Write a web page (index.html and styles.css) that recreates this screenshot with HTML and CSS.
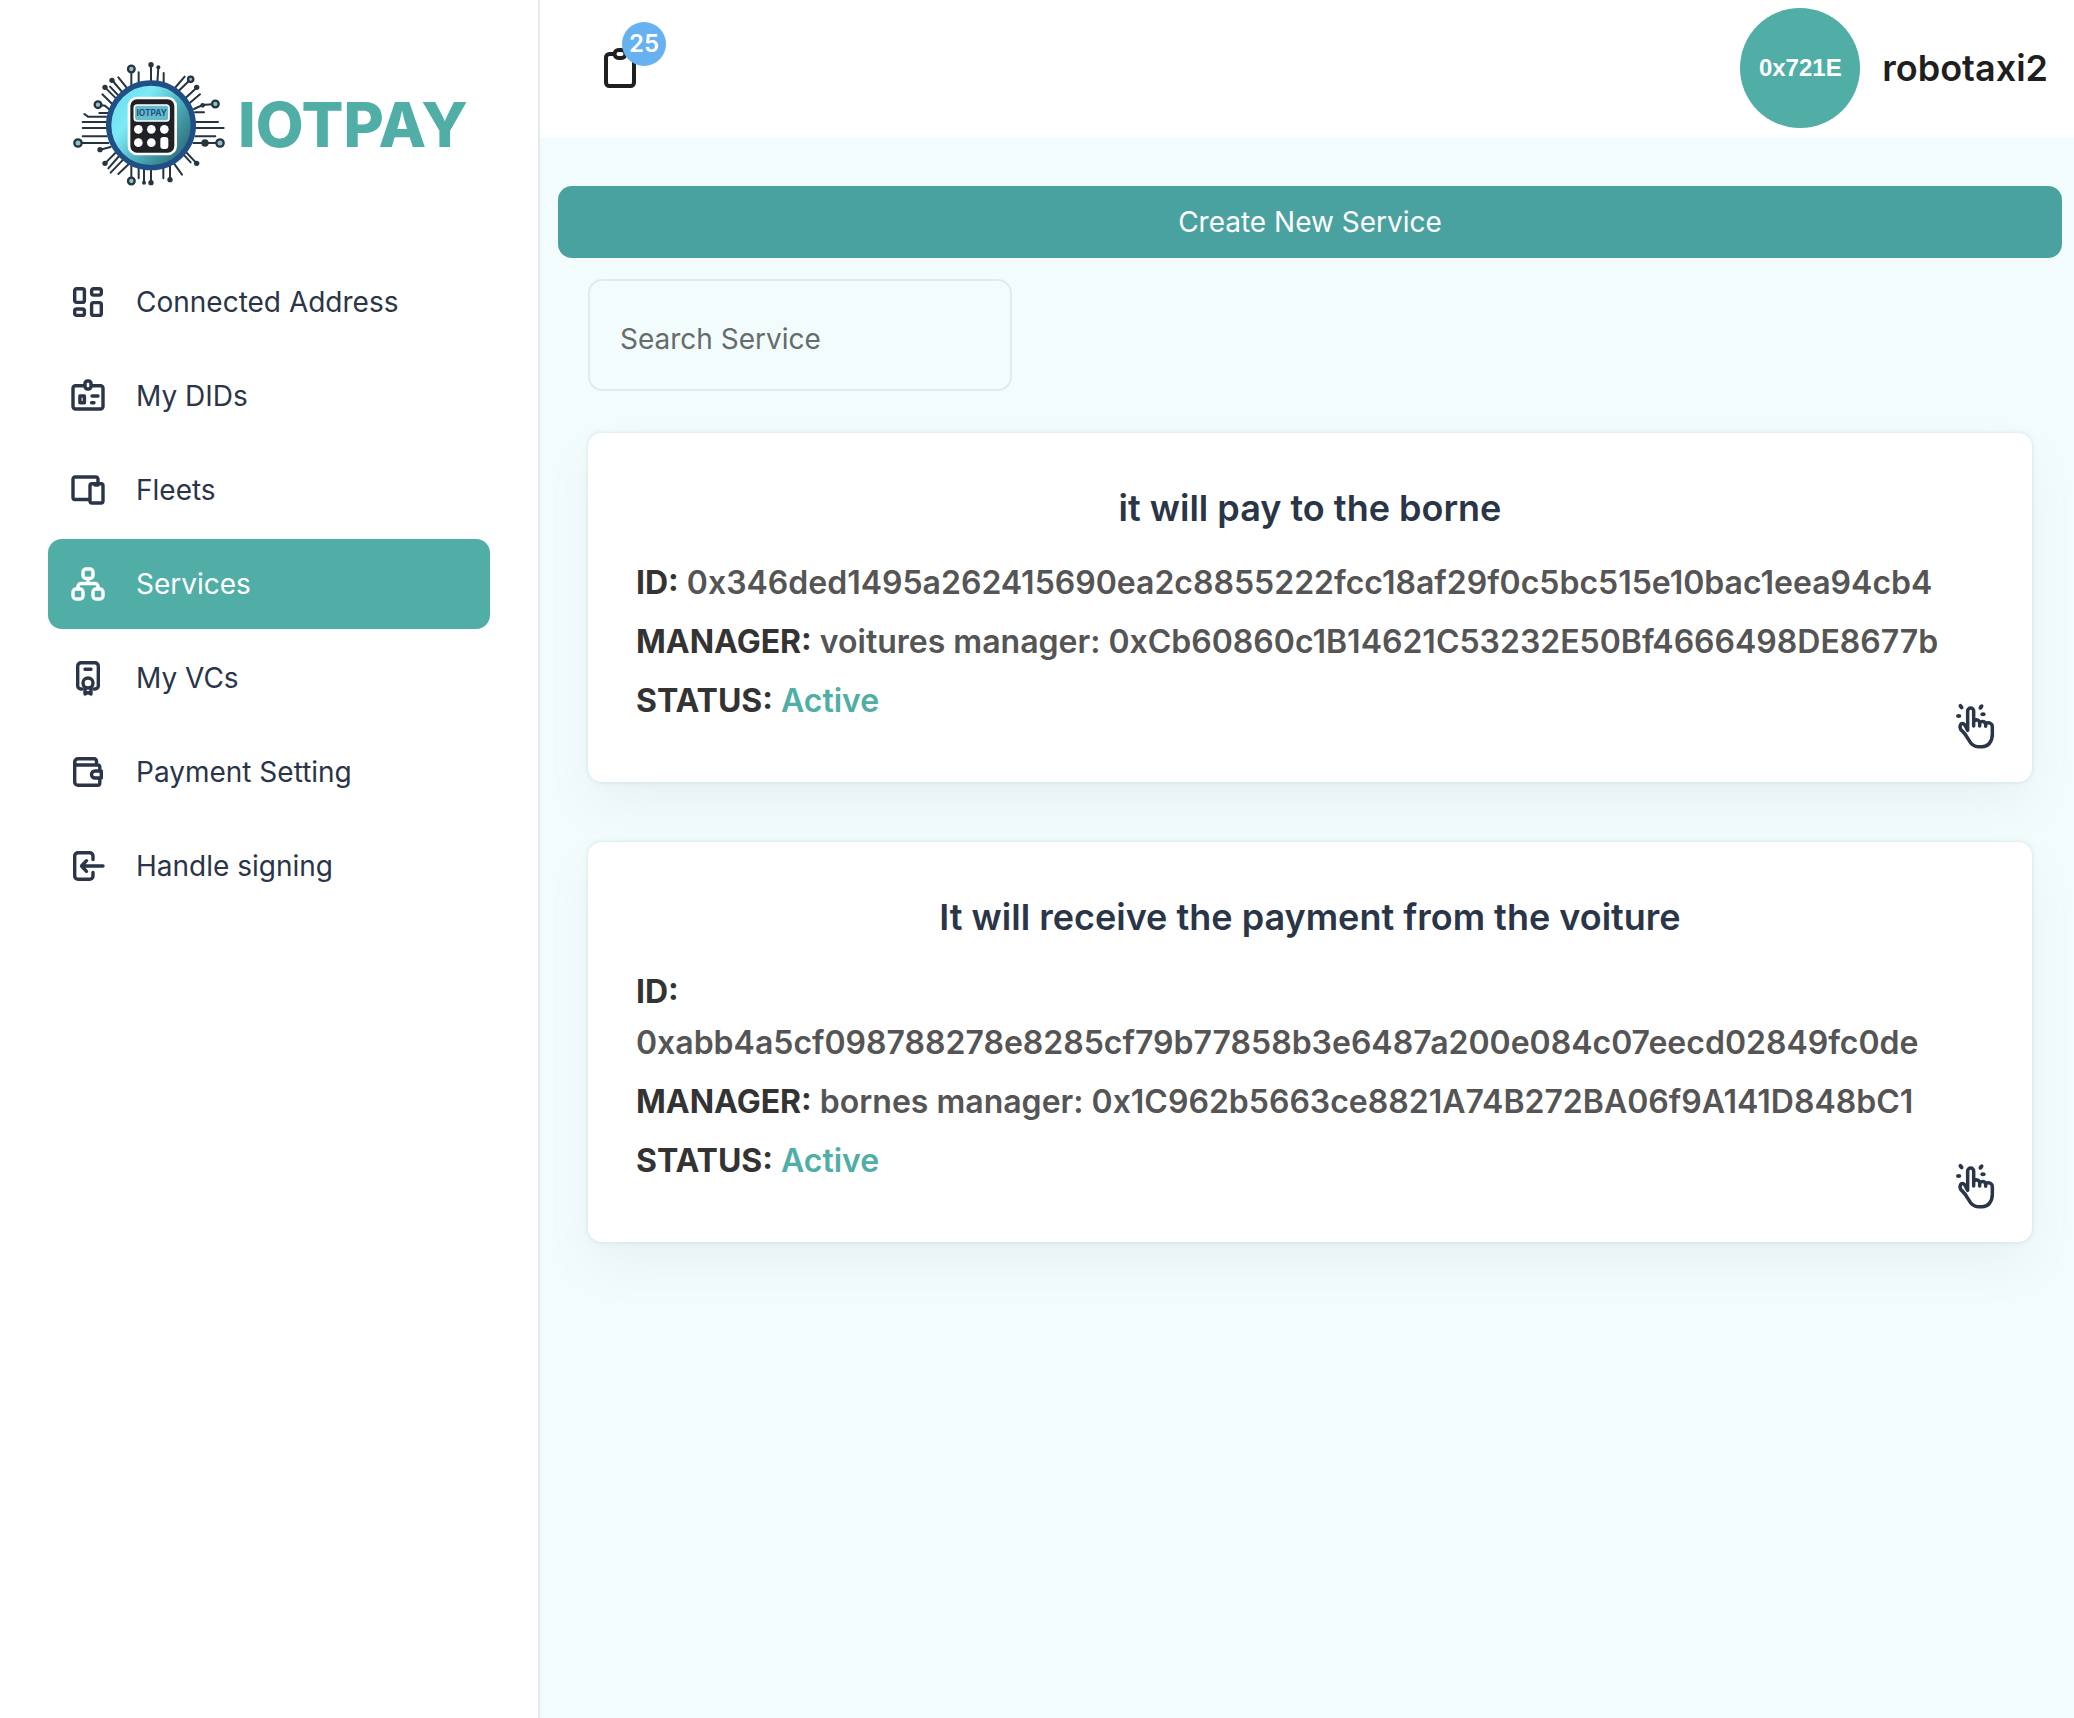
FILE: index.html
```
<!DOCTYPE html>
<html lang="en">
<head>
<meta charset="utf-8">
<title>IOTPAY - Services</title>
<link rel="stylesheet" href="styles.css">
</head>
<body>
<svg width="0" height="0" class="sprite" aria-hidden="true">
  <symbol id="tap" viewBox="45 38 120 138">
    <g fill="none" stroke="currentColor" stroke-width="10.500" stroke-linecap="round" stroke-linejoin="round">
      <path d="M83 119V61a9 9 0 0 1 18 0V106M101 92c8-8 18-4 18 6v8M119 96c8-7 18-3 18 7v4M137 99c10-6 20-1 20 10v22c0 24-14 37-31 37h-10c-16 0-24-9-30-21-7-14-14-22-24-31-5-12 1-19 8-17 5 2 8 12 13 20" transform="translate(0 1)"/>
    </g>
    <g fill="currentColor">
      <ellipse cx="63" cy="49" rx="6" ry="9" transform="rotate(-35 63 49)"/>
      <ellipse cx="123" cy="50" rx="6" ry="9" transform="rotate(35 123 50)"/>
      <ellipse cx="56" cy="77" rx="8" ry="6"/>
      <ellipse cx="129" cy="72" rx="8" ry="6"/>
    </g>
  </symbol>
</svg>
<div class="app">
  <aside class="sidebar">
    <a class="logo" href="#">
      <svg class="logo-mark" viewBox="0 0 480 420" aria-hidden="true">
        <defs>
          <linearGradient id="disc" x1="0.1" y1="0.1" x2="0.95" y2="0.75">
            <stop offset="0" stop-color="#6fe0f0"/>
            <stop offset="0.3" stop-color="#7beaf5"/>
            <stop offset="0.65" stop-color="#4aa9b8"/>
            <stop offset="1" stop-color="#2f6f7b"/>
          </linearGradient>
        </defs>
        <g fill="none" stroke="#26343f" stroke-width="6" stroke-linecap="round">
          <path d="M184 42V92M206 52V92M243 30V82M265 38L262 82M281 54V88"/>
          <path d="M344 65L312 102M362 73L322 112M380 98L340 135M390 118L352 150M436 147L398 150L372 162M402 172H375"/>
          <path d="M444 201H376M461 219H376M436 244H376M450 264H370"/>
          <path d="M380 325L345 288M362 322L338 296M336 359L308 320M300 373V330M280 370V335M243 382V345M222 382V340M206 370V335M184 378V330"/>
          <path d="M105 325L142 288M115 340L150 300M122 353L168 305M145 357L182 322"/>
          <path d="M90 284L122 276M24 264H115M38 244H110M38 219H110M38 201H110M43 177L54 185H110M88 174H118M84 149L105 152L128 172"/>
          <path d="M97 118L138 158M105 97L150 142M120 95L158 135M126 75L168 125M145 67L178 108"/>
        </g>
        <g fill="#26343f">
          <circle cx="243" cy="29" r="8"/><circle cx="265" cy="37" r="6"/><circle cx="380" cy="97" r="8"/>
          <circle cx="398" cy="151" r="7"/><circle cx="405" cy="264" r="11"/><circle cx="380" cy="325" r="8"/>
          <circle cx="300" cy="374" r="8"/><circle cx="243" cy="383" r="8"/><circle cx="222" cy="383" r="6"/>
          <circle cx="105" cy="325" r="8"/><circle cx="90" cy="284" r="8"/><circle cx="105" cy="97" r="8"/><circle cx="126" cy="76" r="8"/>
        </g>
        <g fill="#8fc3cc" stroke="#26343f" stroke-width="7">
          <circle cx="184" cy="42" r="10"/><circle cx="362" cy="73" r="8"/><circle cx="436" cy="147" r="10"/>
          <circle cx="450" cy="264" r="11"/><circle cx="184" cy="378" r="10"/><circle cx="24" cy="264" r="11"/><circle cx="84" cy="149" r="10"/>
        </g>
        <circle cx="243" cy="211" r="127" fill="url(#disc)" stroke="#1f4f85" stroke-width="16"/>
        <rect x="177" y="129" width="140" height="168" rx="24" fill="#1f2126" stroke="#fff" stroke-width="8"/>
        <rect x="193" y="150" width="104" height="48" rx="8" fill="#66bccb" stroke="#fff" stroke-width="5"/>
        <text x="245" y="184" text-anchor="middle" class="logo-screen">IOTPAY</text>
        <g fill="#fff">
          <circle cx="205" cy="223" r="13"/><circle cx="244" cy="223" r="13"/><circle cx="283" cy="223" r="13"/>
          <circle cx="205" cy="263" r="13"/><circle cx="244" cy="263" r="13"/><rect x="271" y="246" width="24" height="36" rx="9"/>
        </g>
      </svg>
      <span class="logo-text">IOTPAY</span>
    </a>
    <nav class="nav" aria-label="Main">
      <a class="nav-item" href="#">
        <svg class="icon" viewBox="0 0 36 36" aria-hidden="true"><rect x="4.7" y="4.7" width="9.7" height="13.7" rx="2"/><rect x="21.6" y="4.7" width="9.7" height="6.4" rx="2"/><rect x="4.7" y="25" width="9.7" height="6.4" rx="2"/><rect x="21.6" y="18.6" width="9.7" height="12.8" rx="2"/></svg>
        Connected Address</a>
      <a class="nav-item" href="#">
        <svg class="icon" viewBox="0 0 36 36" aria-hidden="true"><path d="M14 7.7H5.5A2.5 2.5 0 0 0 3 10.200V28.500A2.500 2.500 0 0 0 5.500 31H30.500A2.500 2.500 0 0 0 33 28.500V10.200A2.500 2.500 0 0 0 30.500 7.700H22"/><rect x="15" y="3" width="6" height="8" rx="2.500"/><rect x="9.900" y="18" width="4.500" height="6.700"/><path d="M22 18H28M21.600 24.700H24"/></svg>
        My DIDs</a>
      <a class="nav-item" href="#">
        <svg class="icon" viewBox="0 0 36 36" aria-hidden="true"><path d="M28 11V7A2 2 0 0 0 26 5H5A2 2 0 0 0 3 7V25.500A2 2 0 0 0 5 27.500H19"/><rect x="20" y="11.700" width="13" height="19.300" rx="2"/><path d="M25 13H28"/></svg>
        Fleets</a>
      <a class="nav-item active" href="#" aria-current="page">
        <svg class="icon" viewBox="0 0 36 36" aria-hidden="true"><rect x="13" y="3" width="10" height="9.500" rx="3"/><rect x="3" y="23" width="10" height="10" rx="3"/><rect x="23" y="23" width="10" height="10" rx="3"/><path d="M18 12.500V17.500M8 22V20.500A3 3 0 0 1 11 17.500H25A3 3 0 0 1 28 20.500V22"/></svg>
        Services</a>
      <a class="nav-item" href="#">
        <svg class="icon" viewBox="0 0 36 36" aria-hidden="true"><path d="M12 29H11A3.300 3.300 0 0 1 7.700 25.700V6A3.300 3.300 0 0 1 11 2.700H25A3.300 3.300 0 0 1 28.300 6V25.700A3.300 3.300 0 0 1 25 29H24M15 9.300H21"/><circle cx="18" cy="23" r="5"/><path d="M15 28V34L18 32.500L21 34V28"/></svg>
        My VCs</a>
      <a class="nav-item" href="#">
        <svg class="icon" viewBox="0 0 36 36" aria-hidden="true"><path d="M26.500 11V7A2.300 2.300 0 0 0 24.200 4.700H8A3.300 3.300 0 0 0 4.700 8V28A3.300 3.300 0 0 0 8 31.300H27.500A2.300 2.300 0 0 0 29.800 29V25M4.700 8.500A2.500 2.500 0 0 0 7.200 11H27.500A2.300 2.300 0 0 1 29.800 13.300V16M31.300 17H25A3.500 3.500 0 0 0 25 24H31.300Z"/></svg>
        Payment Setting</a>
      <a class="nav-item" href="#">
        <svg class="icon" viewBox="0 0 36 36" aria-hidden="true"><path d="M23 11.500V8A3.300 3.300 0 0 0 19.700 4.700H8A3.300 3.300 0 0 0 4.700 8V28A3.300 3.300 0 0 0 8 31.300H19.700A3.300 3.300 0 0 0 23 28V24.500M33 18H11.500M16.500 12.700L11.500 18L16.500 23.300"/></svg>
        Handle signing</a>
    </nav>
  </aside>
  <div class="page">
    <header class="topbar">
      <button class="tasks" type="button" aria-label="Pending requests">
        <svg class="clipboard" viewBox="0 0 32 40" aria-hidden="true"><path d="M9 6H5.500A3.500 3.500 0 0 0 2 9.500V34.500A3.500 3.500 0 0 0 5.500 38H26.500A3.500 3.500 0 0 0 30 34.500V9.500A3.500 3.500 0 0 0 26.500 6H23"/><rect x="10.500" y="2" width="11" height="8" rx="4"/></svg>
        <span class="badge">25</span>
      </button>
      <div class="user">
        <span class="avatar">0x721E</span>
        <span class="user-name">robotaxi2</span>
      </div>
    </header>
    <main class="content">
      <button class="create" type="button">Create New Service</button>
      <input class="search" type="text" placeholder="Search Service" aria-label="Search Service">
      <article class="card">
        <h2>it will pay to the borne</h2>
        <p><strong>ID:</strong> 0x346ded1495a262415690ea2c8855222fcc18af29f0c5bc515e10bac1eea94cb4</p>
        <p><strong>MANAGER:</strong> voitures manager: 0xCb60860c1B14621C53232E50Bf4666498DE8677b</p>
        <p><strong>STATUS:</strong> <span class="status">Active</span></p>
        <button class="open" type="button" aria-label="Open service"><svg width="40" height="46" aria-hidden="true"><use href="#tap"/></svg></button>
      </article>
      <article class="card">
        <h2>It will receive the payment from the voiture</h2>
        <p><strong>ID:</strong> 0xabb4a5cf098788278e8285cf79b77858b3e6487a200e084c07eecd02849fc0de</p>
        <p><strong>MANAGER:</strong> bornes manager: 0x1C962b5663ce8821A74B272BA06f9A141D848bC1</p>
        <p><strong>STATUS:</strong> <span class="status">Active</span></p>
        <button class="open" type="button" aria-label="Open service"><svg width="40" height="46" aria-hidden="true"><use href="#tap"/></svg></button>
      </article>
    </main>
  </div>
</div>
</body>
</html>
```
FILE: styles.css
```
*,
*::before,
*::after {
  box-sizing: border-box;
}

body {
  margin: 0;
  font-family: Inter, "Liberation Sans", sans-serif;
  font-size: 28px;
  color: #2a3547;
  background: #f2fcfd;
}

button,
input {
  font: inherit;
}

.sprite {
  position: absolute;
}

.app {
  display: flex;
  min-height: 100vh;
}

/* Sidebar */
.sidebar {
  flex: none;
  width: 540px;
  padding: 55px 48px;
  background: #fff;
  border-right: 2px solid #e5eaef;
}

.logo {
  display: flex;
  align-items: center;
  gap: 8px;
  padding-left: 22px;
  text-decoration: none;
  color: #50aea7;
}

.logo-mark {
  flex: none;
  width: 160px;
  height: 140px;
}

.logo-screen {
  font-size: 25px;
  font-weight: 700;
  fill: #1f4f85;
}

.logo-text {
  font-size: 62px;
  font-weight: 800;
  line-height: 76px;
}

.nav {
  display: flex;
  flex-direction: column;
  gap: 4px;
  margin-top: 62px;
}

.nav-item {
  display: flex;
  align-items: center;
  gap: 30px;
  height: 90px;
  padding: 0 22px;
  border-radius: 14px;
  color: #2a3547;
  text-decoration: none;
}

.nav-item.active {
  color: #fff;
  background: #50aea7;
}

.icon {
  flex: none;
  width: 36px;
  height: 36px;
  fill: none;
  stroke: currentColor;
  stroke-width: 3.4;
  stroke-linecap: round;
  stroke-linejoin: round;
}

/* Page */
.page {
  flex: 1;
  min-width: 0;
}

.topbar {
  display: flex;
  align-items: center;
  justify-content: space-between;
  padding: 8px 26px 10px 64px;
  background: #fff;
}

.tasks {
  position: relative;
  padding: 0;
  border: 0;
  background: none;
  color: #1f1f1f;
}

.clipboard {
  display: block;
  width: 32px;
  height: 40px;
  fill: none;
  stroke: currentColor;
  stroke-width: 4;
  stroke-linecap: round;
}

.badge {
  position: absolute;
  top: -26px;
  left: 18px;
  width: 44px;
  height: 44px;
  border-radius: 50%;
  background: #66b2f0;
  color: #fff;
  font-size: 24px;
  font-weight: 600;
  line-height: 44px;
  text-align: center;
}

.user {
  display: flex;
  align-items: center;
  gap: 22px;
}

.avatar {
  width: 120px;
  height: 120px;
  border-radius: 50%;
  background: #50aea7;
  color: #fff;
  font-family: "Liberation Sans", Arial, sans-serif;
  font-size: 24px;
  font-weight: 700;
  line-height: 120px;
  text-align: center;
}

.user-name {
  font-size: 36px;
  font-weight: 600;
  color: #1f1f1f;
}

.content {
  padding: 48px 12px 48px 18px;
}

.create {
  display: block;
  width: 100%;
  height: 72px;
  border: 0;
  border-radius: 14px;
  background: #4aa2a0;
  color: #fff;
}

.search {
  display: block;
  width: 424px;
  height: 112px;
  margin: 21px 30px 42px;
  padding: 8px 30px 0;
  border: 2px solid #e5e8ec;
  border-radius: 14px;
  background: transparent;
  color: #2a3547;
}

.search::placeholder {
  color: #666b6c;
  opacity: 1;
}

.card {
  position: relative;
  margin: 0 30px 60px;
  padding: 48px;
  border-radius: 14px;
  background: #fff;
  box-shadow: 0 0 4px rgba(145, 158, 171, 0.3), 0 24px 48px -8px rgba(145, 158, 171, 0.13);
}

.card h2 {
  margin: 0 0 22px;
  font-size: 36px;
  font-weight: 600;
  line-height: 54px;
  text-align: center;
}

.card p {
  margin: 0 0 8px;
  padding-right: 24px;
  font-size: 32px;
  font-weight: 600;
  line-height: 51px;
  color: #555;
}

.card strong {
  font-weight: 700;
  color: #333;
}

.card .status {
  color: #50aea7;
}

.open {
  position: absolute;
  right: 37px;
  bottom: 33px;
  padding: 0;
  border: 0;
  background: none;
  color: #2a3547;
}

.open svg {
  display: block;
}
```
